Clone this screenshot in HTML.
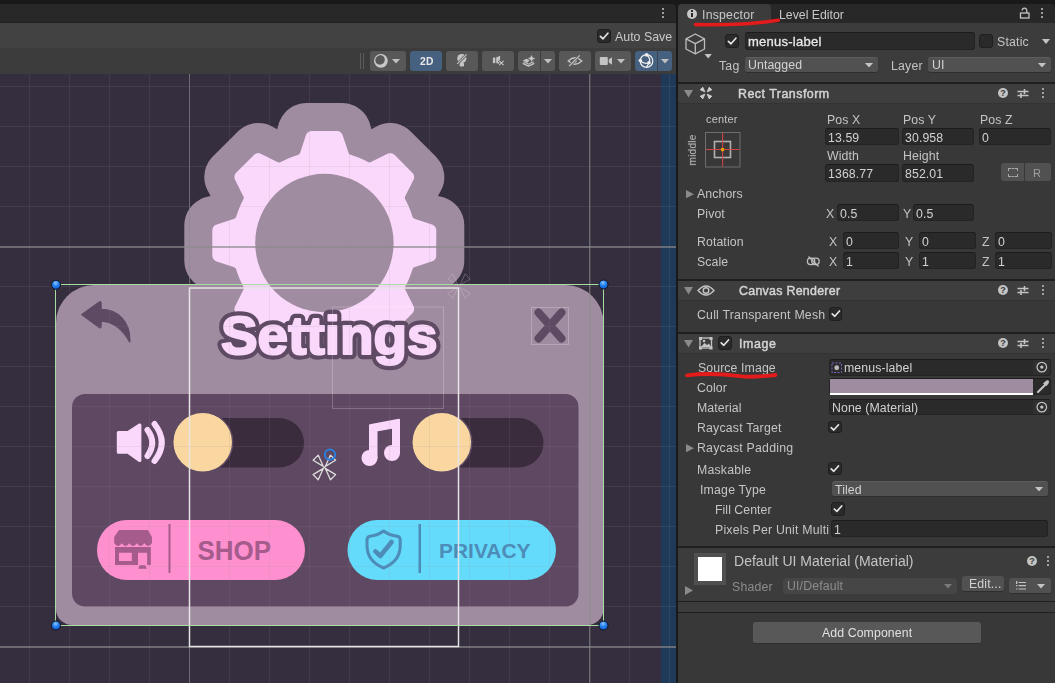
<!DOCTYPE html>
<html><head><meta charset="utf-8">
<style>
*{box-sizing:border-box;margin:0;padding:0}
html,body{width:1055px;height:683px;overflow:hidden;background:#191919;font-family:"Liberation Sans",sans-serif;color:#c4c4c4;font-size:12px;position:relative}
.a{position:absolute}
.t{position:absolute;white-space:nowrap;font-family:"Liberation Sans",sans-serif;will-change:transform}
</style></head><body>
<div class="a" style="left:0px;top:4px;width:676.00px;height:19.00px;background:#282828;border-radius:0 4px 0 0"></div>
<div class="a" style="left:0px;top:22px;width:676.00px;height:1.00px;background:#222222;"></div>
<div class="a" style="left:0px;top:23px;width:676.00px;height:25.00px;background:#424242;"></div>
<div class="a" style="left:0px;top:48px;width:676.00px;height:26.00px;background:#3c3c3c;"></div>
<div class="a" style="left:662px;top:8px;width:2px;height:2px;background:#c4c4c4;border-radius:1px"></div>
<div class="a" style="left:662px;top:12px;width:2px;height:2px;background:#c4c4c4;border-radius:1px"></div>
<div class="a" style="left:662px;top:16px;width:2px;height:2px;background:#c4c4c4;border-radius:1px"></div>
<div class="a" style="left:597px;top:29px;width:14.00px;height:14.00px;background:#2a2a2a;border:1px solid #1f1f1f;border-radius:3px"></div>
<svg class="a" style="left:597px;top:29px" width="14" height="14" viewBox="0 0 14 14"><path d="M3.4,7.3 L6.0,9.8 L10.9,4.2" fill="none" stroke="#e4e4e4" stroke-width="1.7" stroke-linecap="round" stroke-linejoin="round"/></svg>
<div class="t" style="left:614.5px;top:31.00px;font-size:12.4px;line-height:12.4px;color:#c8c8c8;letter-spacing:0px;">Auto Save</div>
<div class="a" style="left:360px;top:53px;width:1.00px;height:16.00px;background:#5c5c5c;"></div>
<div class="a" style="left:363px;top:53px;width:1.00px;height:16.00px;background:#5c5c5c;"></div>
<div class="a" style="left:370px;top:51px;width:36.00px;height:20.00px;background:#585858;border-radius:3px"></div>
<div class="a" style="left:410px;top:51px;width:32.00px;height:20.00px;background:#46607f;border-radius:3px"></div>
<div class="a" style="left:446px;top:51px;width:32.00px;height:20.00px;background:#585858;border-radius:3px"></div>
<div class="a" style="left:482px;top:51px;width:32.00px;height:20.00px;background:#585858;border-radius:3px"></div>
<div class="a" style="left:518px;top:51px;width:37.00px;height:20.00px;background:#585858;border-radius:3px"></div>
<div class="a" style="left:540px;top:51px;width:1.00px;height:20.00px;background:#3e3e3e;"></div>
<div class="a" style="left:559px;top:51px;width:32.00px;height:20.00px;background:#585858;border-radius:3px"></div>
<div class="a" style="left:595px;top:51px;width:36.00px;height:20.00px;background:#585858;border-radius:3px"></div>
<div class="a" style="left:635px;top:51px;width:37.00px;height:20.00px;background:#46607f;border-radius:3px"></div>
<div class="a" style="left:657px;top:51px;width:1.00px;height:20.00px;background:#3c4450;"></div>
<svg class="a" style="left:391.5px;top:59px" width="8.0" height="4.5" viewBox="0 0 8.0 4.5"><path d="M0,0 L8.0,0 L4.0,4.5 Z" fill="#c0c0c0"/></svg>
<svg class="a" style="left:543.5px;top:59px" width="8.0" height="4.5" viewBox="0 0 8.0 4.5"><path d="M0,0 L8.0,0 L4.0,4.5 Z" fill="#c0c0c0"/></svg>
<svg class="a" style="left:617px;top:59px" width="8" height="4.5" viewBox="0 0 8 4.5"><path d="M0,0 L8,0 L4.0,4.5 Z" fill="#c0c0c0"/></svg>
<svg class="a" style="left:660.5px;top:59px" width="8.0" height="4.5" viewBox="0 0 8.0 4.5"><path d="M0,0 L8.0,0 L4.0,4.5 Z" fill="#c0c0c0"/></svg>
<div class="t" style="left:419.8px;top:56.58px;font-size:10.3px;line-height:10.3px;color:#e8e8e8;letter-spacing:0.2px;font-weight:bold;">2D</div>
<svg class="a" style="left:370px;top:51px" width="302" height="20" viewBox="370 51 302 20">
<circle cx="380.9" cy="60.8" r="6.3" fill="none" stroke="#c8c8c8" stroke-width="1.2"/>
<path d="M374.6,60.8 A6.3,6.3 0 1 0 387.2,60.8 A6.3,6.3 0 1 0 374.6,60.8 Z M375,59.8 A4.9,4.9 0 1 1 384.8,59.8 A4.9,4.9 0 1 1 375,59.8 Z" fill="#c8c8c8" fill-rule="evenodd"/>
<g fill="#c4c4c4">
<circle cx="461.8" cy="58.6" r="4.6"/>
<rect x="459.6" y="62.8" width="4.4" height="3.8" rx="1.3"/>
<path d="M456.3,64.8 L467.7,53.4" stroke="#585858" stroke-width="2.6"/>
<path d="M457.2,63.8 L466.7,54.3" stroke="#c4c4c4" stroke-width="1.1"/>
<rect x="492.9" y="57.6" width="2.4" height="5.5"/>
<path d="M496.2,57.6 L500.1,55.8 V64.3 L496.2,63 Z"/>
<path d="M498.9,60.6 L503.9,65.4 M503.9,60.6 L498.9,65.4" stroke="#585858" stroke-width="2.6"/>
<path d="M499.2,60.9 L503.6,65.1 M503.6,60.9 L499.2,65.1" stroke="#c4c4c4" stroke-width="1.2"/>
<path d="M522.8,60.6 L526.5,58.8 L529.5,60.3 L527.5,62.8 Z"/>
<path d="M522.8,63.3 L528.5,66.2 L534.3,63.3" fill="none" stroke="#c4c4c4" stroke-width="1.4" stroke-linejoin="round"/>
<path d="M523.5,61.8 L528.5,64.2 L533.5,61.8" fill="none" stroke="#c4c4c4" stroke-width="1.1"/>
<path d="M531.5,54.8 Q532.1,57.9 535.3,58.5 Q532.1,59.1 531.5,62.2 Q530.9,59.1 527.7,58.5 Q530.9,57.9 531.5,54.8 Z"/>
<path d="M568.2,61 Q575,54.5 581.8,61 Q575,67.5 568.2,61 Z" fill="none" stroke="#c4c4c4" stroke-width="1.3"/>
<circle cx="575" cy="61" r="1.8"/>
<path d="M568.6,66.6 L580.2,54.9" stroke="#585858" stroke-width="2.6"/>
<path d="M569.1,66.1 L579.7,55.4" stroke="#c4c4c4" stroke-width="1.3"/>
<rect x="599.8" y="57" width="8" height="8" rx="1"/>
<path d="M608.8,59.4 L612,57.3 V64.7 L608.8,62.6 Z"/>
</g>
<g fill="none" stroke="#f0f0f0" stroke-width="1.2">
<circle cx="646.5" cy="61" r="6.3"/>
<path d="M640.3,60.5 Q644,64.8 649,62.7 M646.6,54.8 Q651.2,58.8 649,62.7 Q647.8,65.3 646.3,67.3"/>
</g>
<g fill="#f0f0f0"><circle cx="646.6" cy="54.9" r="1.8"/><circle cx="640.3" cy="60.5" r="1.8"/><circle cx="649" cy="62.7" r="1.8"/></g>
</svg>
<svg class="a" style="left:0;top:74px" width="676" height="609" viewBox="0 74 676 609">
<rect x="0" y="74" width="676" height="609" fill="#352e3e"/>
<!-- panel -->
<path d="M56,323 A38,38 0 0 1 94,285 L565.5,285 A38,38 0 0 1 603.5,323 L603.5,609 A16,16 0 0 1 587.5,625 L72,625 A16,16 0 0 1 56,609 Z" fill="#a08ca0"/>
<path d="M72,407 A13,13 0 0 1 85,394 L565.5,394 A13,13 0 0 1 578.5,407 L578.5,593.5 A13,13 0 0 1 565.5,606.5 L85,606.5 A13,13 0 0 1 72,593.5 Z" fill="#5f4862"/>
<!-- gear outline -->
<path d="M210.6,195.9 L204.4,197.6 L201.8,198.6 L199.3,199.9 L195.8,202.2 L192.6,204.9 L189.9,208.2 L187.6,211.7 L186.0,215.6 L184.6,221.0 L184.3,225.2 L184.3,260.8 L184.8,266.3 L186.0,270.4 L187.6,274.3 L189.9,277.8 L193.6,282.0 L196.9,284.7 L200.5,286.8 L204.4,288.4 L210.6,290.1 L207.5,295.7 L205.8,299.6 L204.7,303.6 L204.3,307.8 L204.4,312.0 L205.6,317.5 L207.1,321.4 L209.2,325.1 L212.8,329.4 L237.9,354.5 L241.0,357.3 L244.6,359.6 L248.4,361.3 L252.5,362.4 L256.7,363.0 L260.9,362.9 L265.0,362.3 L269.1,361.0 L271.6,359.8 L277.2,356.7 L278.9,362.9 L279.9,365.5 L281.9,369.2 L284.3,372.6 L288.3,376.6 L291.8,379.0 L295.6,380.8 L299.6,382.2 L303.7,382.9 L306.5,383.0 L342.1,383.0 L347.6,382.5 L351.7,381.3 L355.6,379.7 L360.3,376.6 L363.3,373.7 L366.0,370.4 L368.1,366.8 L369.7,362.9 L371.4,356.7 L377.0,359.8 L380.9,361.5 L384.9,362.6 L389.1,363.0 L393.3,362.9 L398.8,361.7 L402.7,360.2 L406.4,358.1 L410.7,354.5 L435.8,329.4 L438.6,326.3 L440.9,322.7 L442.6,318.9 L443.7,314.8 L444.3,310.6 L444.2,306.4 L443.6,302.3 L442.3,298.2 L441.1,295.7 L438.0,290.1 L444.2,288.4 L446.8,287.4 L450.5,285.4 L453.9,283.0 L457.0,280.0 L460.3,275.5 L462.1,271.7 L463.5,267.7 L464.2,263.6 L464.3,260.8 L464.3,225.2 L463.8,219.7 L462.6,215.6 L460.3,210.5 L457.9,207.0 L455.0,204.0 L451.7,201.3 L448.1,199.2 L444.2,197.6 L438.0,195.9 L441.1,190.3 L442.8,186.4 L443.9,182.4 L444.3,178.2 L444.2,174.0 L443.0,168.5 L441.5,164.6 L439.4,160.9 L435.8,156.6 L410.7,131.5 L407.6,128.7 L404.0,126.4 L400.2,124.7 L396.1,123.6 L391.9,123.0 L387.7,123.1 L383.6,123.7 L379.5,125.0 L377.0,126.2 L371.4,129.3 L369.7,123.1 L368.1,119.2 L366.0,115.6 L363.3,112.3 L360.3,109.4 L355.6,106.3 L351.7,104.7 L347.6,103.5 L342.1,103.0 L306.5,103.0 L301.0,103.5 L296.9,104.7 L293.0,106.3 L289.5,108.6 L286.2,111.3 L283.5,114.5 L281.9,116.8 L279.9,120.5 L278.9,123.1 L277.2,129.3 L271.6,126.2 L269.1,125.0 L266.4,124.1 L262.3,123.2 L258.1,123.0 L253.9,123.3 L251.1,123.9 L247.1,125.2 L242.2,127.9 L238.9,130.5 L211.8,157.6 L208.4,162.1 L206.0,167.1 L204.9,171.2 L204.3,176.8 L204.5,181.0 L205.8,186.4 L207.5,190.3 L210.6,195.9 Z" fill="#a08ca0"/>
<!-- gear -->
<path d="M236.1,216.8 L235.4,218.0 L234.3,218.7 L215.3,225.1 L214.0,226.1 L213.1,227.3 L212.5,228.9 L212.3,230.4 L212.3,255.9 L213.0,258.5 L214.2,260.1 L215.9,261.2 L234.2,267.2 L235.3,267.9 L236.0,268.9 L237.7,274.0 L239.7,279.2 L243.7,287.5 L243.8,288.5 L243.5,289.5 L234.7,307.1 L234.4,309.4 L235.1,311.8 L236.2,313.3 L254.1,331.2 L255.2,332.1 L256.5,332.6 L258.5,332.9 L260.5,332.5 L277.7,323.9 L278.9,323.5 L280.2,323.8 L285.0,326.2 L290.1,328.4 L298.8,331.5 L299.5,332.1 L300.0,333.0 L306.3,351.7 L307.9,353.7 L309.1,354.4 L310.5,354.9 L337.0,355.0 L338.4,354.8 L339.8,354.3 L341.4,353.1 L342.5,351.4 L348.5,333.1 L349.2,332.0 L350.2,331.3 L355.3,329.6 L360.5,327.6 L368.8,323.6 L369.8,323.5 L370.8,323.8 L388.4,332.6 L389.8,332.9 L391.3,332.8 L392.7,332.4 L393.9,331.7 L412.5,313.2 L413.4,312.1 L413.9,310.8 L414.2,308.8 L413.8,306.8 L405.2,289.6 L404.8,288.4 L405.1,287.1 L407.5,282.3 L409.7,277.2 L412.8,268.5 L413.4,267.8 L414.3,267.3 L433.0,261.0 L435.0,259.4 L435.7,258.2 L436.2,256.8 L436.3,230.3 L436.1,228.9 L435.6,227.5 L434.4,225.9 L432.7,224.8 L414.4,218.8 L413.3,218.1 L412.6,217.1 L410.9,212.0 L408.9,206.8 L404.9,198.5 L404.8,197.5 L405.1,196.5 L413.9,178.9 L414.2,177.5 L414.1,176.0 L413.7,174.6 L413.0,173.4 L394.5,154.8 L393.4,153.9 L392.1,153.4 L390.1,153.1 L388.1,153.5 L370.9,162.1 L369.7,162.5 L368.4,162.2 L363.6,159.8 L358.5,157.6 L349.8,154.5 L349.1,153.9 L348.6,153.0 L342.3,134.3 L340.7,132.3 L339.4,131.5 L338.1,131.1 L311.6,131.0 L310.2,131.2 L308.8,131.7 L307.2,132.9 L306.1,134.6 L300.1,152.9 L299.4,154.0 L298.4,154.7 L293.3,156.4 L288.1,158.4 L279.8,162.4 L278.8,162.5 L277.8,162.2 L260.2,153.4 L258.8,153.1 L257.1,153.2 L255.7,153.7 L254.5,154.5 L236.1,172.8 L235.2,173.9 L234.7,175.2 L234.4,177.2 L234.8,179.2 L243.4,196.4 L243.8,197.6 L243.5,198.9 L240.9,204.2 L238.9,208.9 L236.1,216.8 Z" fill="#fad8fb"/>
<circle cx="324.4" cy="243" r="69.2" fill="#a08ca0"/>
<!-- back arrow -->
<path d="M82,314.6 L99,302.3 Q101,301 101,303.5 L101,309.5 C118,309.5 130.5,322 129.7,341.8 C123,329.5 113,321.5 101,321 L101,326 Q101,328.5 99,327.2 Z" fill="#5e4a63" stroke="#5e4a63" stroke-width="1.5" stroke-linejoin="round"/>
<!-- X -->
<path d="M538.5,312.5 L561.5,338.5 M561.5,312.5 L538.5,338.5" stroke="#5e4a63" stroke-width="8" stroke-linecap="round"/>
<!-- Settings -->
<text x="221" y="354.2" font-family="Liberation Sans" font-weight="bold" font-size="54.5" textLength="216.5" lengthAdjust="spacingAndGlyphs" fill="#5e4a63" stroke="#5e4a63" stroke-width="10.5" stroke-linejoin="round">Settings</text><text x="221" y="354.2" font-family="Liberation Sans" font-weight="bold" font-size="54.5" textLength="216.5" lengthAdjust="spacingAndGlyphs" fill="#fad8fb" stroke="#fad8fb" stroke-width="2.2" stroke-linejoin="round">Settings</text>
<!-- toggles -->
<rect x="172" y="418" width="132" height="49.5" rx="24.75" fill="#3a2b3d"/>
<circle cx="202.7" cy="442.3" r="30" fill="#fad7a0" stroke="#5e4a63" stroke-width="1.5"/>
<rect x="412" y="418" width="131.5" height="49.5" rx="24.75" fill="#3a2b3d"/>
<circle cx="441.8" cy="442.3" r="30" fill="#fad7a0" stroke="#5e4a63" stroke-width="1.5"/>
<!-- speaker -->
<path d="M118.3,432.5 L128,432.5 L139.5,425 L139.9,425 L139.9,460.5 L139.5,460.5 L128,452.3 L118.3,452.3 Z" fill="#fad8fb" stroke="#fad8fb" stroke-width="3" stroke-linejoin="round"/>
<path d="M147.5,430 Q157,442.5 147.5,456" fill="none" stroke="#fad8fb" stroke-width="6" stroke-linecap="round"/>
<path d="M154.5,424 Q169,442.5 154.5,461" fill="none" stroke="#fad8fb" stroke-width="6" stroke-linecap="round"/>
<!-- music note -->
<g fill="#fad8fb">
<circle cx="369.5" cy="458" r="8" />
<circle cx="392" cy="453" r="8" />
<path d="M370,425.2 L399,419.7 L399,453 L393,453 L393,427.5 L376.5,430.6 L376.5,458 L370,458 Z" stroke="#fad8fb" stroke-width="2" stroke-linejoin="round"/>
</g>
<!-- shop button -->
<rect x="97" y="520" width="208" height="60" rx="30" fill="#ff90d0"/>
<g fill="#a55b8b">
<path d="M119,530.1 L147.9,530.1 L151.9,537 L151.9,543.3 Q148.1,548.5 144.4,543.3 Q140.6,548.5 136.8,543.3 Q133.1,548.5 129.3,543.3 Q125.5,548.5 121.7,543.3 Q118.0,548.5 114.2,543.3 L114.2,537 Z"/>
<path d="M115,547 L150.8,547 L150.8,564.9 L147.2,564.9 L147.2,552.8 L138,552.8 L138,564.9 L115,564.9 Z M119,552.8 L119,560.9 L131.8,560.9 L131.8,552.8 Z" fill-rule="evenodd"/>
<path d="M139.5,565.3 L145.3,565.3 L146.8,568.8 L138.4,568.8 Z"/>
<rect x="168.5" y="524" width="2" height="49"/>
<text x="197.5" y="560" font-family="Liberation Sans" font-weight="bold" font-size="27.5" textLength="73.5" lengthAdjust="spacingAndGlyphs">SHOP</text>
</g>
<!-- privacy button -->
<rect x="347.5" y="520" width="208.5" height="60" rx="30" fill="#64dbfb"/>
<g fill="#4d8bb8" stroke="none">
<path d="M383.6,531 Q378,535.3 370,536.3 Q367,536.8 367,540 L367,546 Q367,561 383.6,568 Q400.2,561 400.2,546 L400.2,540 Q400.2,536.8 397.2,536.3 Q389.2,535.3 383.6,531 Z" fill="none" stroke="#4d8bb8" stroke-width="3" stroke-linejoin="round"/>
<path d="M375.4,551.4 L380.3,556 L391.6,542" fill="none" stroke="#4d8bb8" stroke-width="4.6" stroke-linecap="round" stroke-linejoin="round"/>
<rect x="418.5" y="524" width="2.5" height="49"/>
<text x="439" y="558" font-family="Liberation Sans" font-weight="bold" font-size="20.5" textLength="91.5" lengthAdjust="spacingAndGlyphs">PRIVACY</text>
</g>
<!-- blue strip -->
<rect x="661" y="74" width="15" height="609" fill="#1f3a58"/>
<!-- grid -->
<g fill="rgba(156,142,158,0.14)"><rect x="29" y="74" width="1" height="609"/><rect x="69" y="74" width="1" height="609"/><rect x="109" y="74" width="1" height="609"/><rect x="149" y="74" width="1" height="609"/><rect x="229" y="74" width="1" height="609"/><rect x="269" y="74" width="1" height="609"/><rect x="309" y="74" width="1" height="609"/><rect x="349" y="74" width="1" height="609"/><rect x="389" y="74" width="1" height="609"/><rect x="429" y="74" width="1" height="609"/><rect x="469" y="74" width="1" height="609"/><rect x="509" y="74" width="1" height="609"/><rect x="549" y="74" width="1" height="609"/><rect x="629" y="74" width="1" height="609"/><rect x="669" y="74" width="1" height="609"/><rect x="0" y="86" width="676" height="1"/><rect x="0" y="126" width="676" height="1"/><rect x="0" y="166" width="676" height="1"/><rect x="0" y="206" width="676" height="1"/><rect x="0" y="286" width="676" height="1"/><rect x="0" y="326" width="676" height="1"/><rect x="0" y="366" width="676" height="1"/><rect x="0" y="406" width="676" height="1"/><rect x="0" y="446" width="676" height="1"/><rect x="0" y="486" width="676" height="1"/><rect x="0" y="526" width="676" height="1"/><rect x="0" y="566" width="676" height="1"/><rect x="0" y="606" width="676" height="1"/></g><g fill="rgba(138,138,138,0.66)"><rect x="189" y="74" width="1" height="609"/><rect x="589" y="74" width="1.4" height="609"/><rect x="0" y="246" width="676" height="2"/><rect x="0" y="646" width="676" height="2"/></g>
<!-- overlays -->
<rect x="332.5" y="307" width="111" height="101.5" fill="none" stroke="rgba(255,255,255,0.22)" stroke-width="1"/>
<rect x="531.5" y="307.5" width="37" height="37" fill="none" stroke="rgba(255,255,255,0.22)" stroke-width="1"/>
<rect x="189.5" y="288" width="269" height="358.5" fill="none" stroke="#e6e3e6" stroke-width="1.5"/>
<rect x="55.5" y="284.5" width="548" height="341" fill="none" stroke="#a8dca2" stroke-width="1"/>
<path d="M323.3,466.4 L313.1,460.2 L318.2,455.1 Z M325.3,466.4 L335.6,460.2 L330.5,455.1 Z M323.3,468.4 L313.1,474.6 L318.2,479.7 Z M325.3,468.4 L335.6,474.6 L330.5,479.7 Z " fill="none" stroke="#dcdcdc" stroke-width="1.3" stroke-linejoin="round"/>
<rect x="323.3" y="466.4" width="2" height="2" fill="#dcdcdc"/>
<circle cx="330" cy="454.6" r="5.1" fill="none" stroke="#2a7fdc" stroke-width="2"/>
<path d="M457.9,285.2 L447.7,279.0 L452.8,273.9 Z M459.9,285.2 L470.2,279.0 L465.1,273.9 Z M457.9,287.2 L447.7,293.4 L452.8,298.5 Z M459.9,287.2 L470.2,293.4 L465.1,298.5 Z " fill="none" stroke="rgba(225,215,225,0.28)" stroke-width="1" stroke-linejoin="round"/>
<defs><radialGradient id="hg" cx="0.45" cy="0.3" r="0.7"><stop offset="0" stop-color="#8cc4ff"/><stop offset="0.45" stop-color="#2a86f0"/><stop offset="1" stop-color="#0656d0"/></radialGradient></defs><g fill="url(#hg)" stroke="#151520" stroke-width="1">
<circle cx="56" cy="284.8" r="4.5"/><circle cx="603.5" cy="284.5" r="4.5"/><circle cx="56" cy="625.5" r="4.5"/><circle cx="603.5" cy="625.5" r="4.5"/>
</g>
</svg>
<div class="a" style="left:676px;top:4px;width:2.00px;height:679.00px;background:#191919;"></div>
<div class="a" style="left:678px;top:4px;width:377.00px;height:19.00px;background:#282828;border-radius:4px 4px 0 0"></div>
<div class="a" style="left:678px;top:4px;width:92.50px;height:19.00px;background:#3c3c3c;border-radius:4px 4px 0 0"></div>
<div class="a" style="left:678px;top:23px;width:377.00px;height:660.00px;background:#383838;"></div>
<div class="a" style="left:678px;top:23px;width:377.00px;height:59.00px;background:#3c3c3c;"></div>
<div class="a" style="left:686.6px;top:9.1px;width:10.4px;height:10.4px;border-radius:50%;background:#c8c8c8"></div>
<div class="a" style="left:691px;top:10.2px;width:1.80px;height:1.50px;background:#282828;"></div>
<div class="a" style="left:691px;top:12.6px;width:1.80px;height:4.60px;background:#282828;"></div>
<div class="t" style="left:702px;top:8.99px;font-size:12.3px;line-height:12.3px;color:#c8c8c8;letter-spacing:0.22px;">Inspector</div>
<div class="t" style="left:779.4px;top:8.99px;font-size:12.3px;line-height:12.3px;color:#c8c8c8;letter-spacing:0px;">Level Editor</div>
<svg class="a" style="left:1019px;top:7px" width="12" height="12" viewBox="0 0 12 12"><rect x="1.5" y="6" width="8.5" height="5" fill="none" stroke="#c4c4c4" stroke-width="1.3"/><path d="M7.8,6 V4 Q7.8,1.2 5.5,1.2 Q3.2,1.2 3.2,3.5" fill="none" stroke="#c4c4c4" stroke-width="1.3"/></svg>
<div class="a" style="left:1041px;top:8px;width:2px;height:2px;background:#c4c4c4;border-radius:1px"></div>
<div class="a" style="left:1041px;top:12px;width:2px;height:2px;background:#c4c4c4;border-radius:1px"></div>
<div class="a" style="left:1041px;top:16px;width:2px;height:2px;background:#c4c4c4;border-radius:1px"></div>
<svg class="a" style="left:678px;top:4px" width="120" height="30" viewBox="678 4 120 30"><path d="M695.5,24.6 Q745,25.5 778.3,20.2" fill="none" stroke="#e31b1b" stroke-width="3.6" stroke-linecap="round"/></svg>
<svg class="a" style="left:684px;top:32px" width="30" height="28" viewBox="684 32 30 28">
<g fill="none" stroke="#bdbdbd" stroke-width="1.3" stroke-linejoin="round">
<path d="M695.3,34 L704.5,38.8 L704.5,49 L695.3,53.8 L686,49 L686,38.8 Z"/>
<path d="M686,38.8 L695.3,43.6 L704.5,38.8 M695.3,43.6 V53.8"/>
</g>
<path d="M704.5,54 H711.8 L708.15,58.5 Z" fill="#c4c4c4"/>
</svg>
<div class="a" style="left:725px;top:34px;width:14.00px;height:14.00px;background:#2a2a2a;border:1px solid #1f1f1f;border-radius:3px"></div>
<svg class="a" style="left:725px;top:34px" width="14" height="14" viewBox="0 0 14 14"><path d="M3.4,7.3 L6.0,9.8 L10.9,4.2" fill="none" stroke="#e4e4e4" stroke-width="1.7" stroke-linecap="round" stroke-linejoin="round"/></svg>
<div class="a" style="left:745.3px;top:32px;width:230.20px;height:18.00px;background:#2a2a2a;border:1px solid #232323;border-top-color:#1c1c1c;border-radius:3px"></div>
<div class="t" style="left:748.3px;top:34.70px;font-size:13px;line-height:13px;color:#e8e8e8;letter-spacing:0.25px;-webkit-text-stroke:0.3px #e8e8e8;">menus-label</div>
<div class="a" style="left:979.2px;top:34.2px;width:13.50px;height:13.50px;background:#2a2a2a;border:1px solid #1f1f1f;border-radius:3px"></div>
<div class="t" style="left:997.2px;top:35.89px;font-size:12.3px;line-height:12.3px;color:#c4c4c4;letter-spacing:0.2px;">Static</div>
<svg class="a" style="left:1042px;top:39px" width="8" height="5" viewBox="0 0 8 5"><path d="M0,0 L8,0 L4.0,5 Z" fill="#c4c4c4"/></svg>
<div class="t" style="left:718.5px;top:59.89px;font-size:12.3px;line-height:12.3px;color:#c4c4c4;letter-spacing:0.2px;">Tag</div>
<div class="a" style="left:744.7px;top:57.2px;width:133.40px;height:15.90px;background:#515151;border-radius:3px;border-bottom:1px solid #2e2e2e;border-top:1px solid #5c5c5c"></div>
<div class="t" style="left:747.8px;top:58.79px;font-size:12.3px;line-height:12.3px;color:#d2d2d2;letter-spacing:0.1px;">Untagged</div>
<svg class="a" style="left:865.1px;top:62.85000000000001px" width="8.0" height="4.599999999999994" viewBox="0 0 8.0 4.599999999999994"><path d="M0,0 L8.0,0 L4.0,4.599999999999994 Z" fill="#c4c4c4"/></svg>
<div class="t" style="left:891.4px;top:59.99px;font-size:12.3px;line-height:12.3px;color:#c4c4c4;letter-spacing:0.2px;">Layer</div>
<div class="a" style="left:928px;top:57px;width:123.00px;height:16.00px;background:#515151;border-radius:3px;border-bottom:1px solid #2e2e2e;border-top:1px solid #5c5c5c"></div>
<div class="t" style="left:931.7px;top:58.79px;font-size:12.3px;line-height:12.3px;color:#d2d2d2;letter-spacing:0.1px;">UI</div>
<svg class="a" style="left:1038px;top:62.7px" width="8" height="4.599999999999994" viewBox="0 0 8 4.599999999999994"><path d="M0,0 L8,0 L4.0,4.599999999999994 Z" fill="#c4c4c4"/></svg>
<div class="a" style="left:678px;top:81.5px;width:377.00px;height:2.00px;background:#1f1f1f;"></div>
<div class="a" style="left:678px;top:83.5px;width:377.00px;height:19.50px;background:#3e3e3e;"></div>
<div class="a" style="left:678px;top:103px;width:377.00px;height:1.00px;background:#333333;"></div>
<svg class="a" style="left:684px;top:90px" width="9" height="7.5" viewBox="0 0 9 7.5"><path d="M0,0 L9,0 L4.5,7.5 Z" fill="#8a8a8a"/></svg>
<svg class="a" style="left:699px;top:86px" width="14" height="14" viewBox="699 86 14 14">
<g fill="#cfcfcf" stroke="#cfcfcf" stroke-width="0.9" stroke-linejoin="round"><path d="M700.2,89.8 L702.8,87.2 L704.8,91.8 Z M711.8,89.8 L709.2,87.2 L707.2,91.8 Z M700.2,96.2 L702.8,98.8 L704.8,94.2 Z M711.8,96.2 L709.2,98.8 L707.2,94.2 Z"/></g></svg>
<div class="t" style="left:738.4px;top:88.00px;font-size:12.4px;line-height:12.4px;color:#d4d4d4;letter-spacing:0.5px;-webkit-text-stroke:0.45px #d4d4d4;">Rect Transform</div>
<div class="a" style="left:998px;top:88px;width:10px;height:10px;border-radius:50%;background:#c4c4c4;color:#383838;font-size:9px;line-height:10px;text-align:center;font-weight:bold">?</div>
<svg class="a" style="left:1017px;top:88px" width="12" height="11" viewBox="0 0 12 11"><path d="M0.5,3.5 H11.5 M0.5,7.5 H11.5" stroke="#c4c4c4" stroke-width="1.4"/><path d="M7.5,1 V6 M4,5 V10" stroke="#c4c4c4" stroke-width="1.6"/></svg>
<div class="a" style="left:1041.5px;top:88px;width:2px;height:2px;background:#c4c4c4;border-radius:1px"></div>
<div class="a" style="left:1041.5px;top:92px;width:2px;height:2px;background:#c4c4c4;border-radius:1px"></div>
<div class="a" style="left:1041.5px;top:96px;width:2px;height:2px;background:#c4c4c4;border-radius:1px"></div>
<div class="t" style="left:706px;top:113.59px;font-size:11px;line-height:11px;color:#c4c4c4;letter-spacing:0.15px;">center</div>
<div class="t" style="left:676.8px;top:145px;width:32px;text-align:center;font-size:10.2px;line-height:10.2px;color:#c4c4c4;letter-spacing:0.15px;transform:rotate(-90deg)">middle</div>
<svg class="a" style="left:705px;top:132px" width="36" height="36" viewBox="705 132 36 36">
<rect x="705.5" y="132.5" width="34.5" height="34.5" fill="none" stroke="#6e6e6e" stroke-width="1"/>
<rect x="714.5" y="141.5" width="16" height="16" fill="none" stroke="#b0b0b0" stroke-width="1.6"/>
<path d="M722.6,133 V166.5 M706,149.5 H739.5" stroke="#cf4545" stroke-width="1.1"/>
<rect x="721" y="148" width="3.2" height="3.2" fill="#e0a000"/>
</svg>
<div class="t" style="left:826.6px;top:114.09px;font-size:12.3px;line-height:12.3px;color:#c4c4c4;letter-spacing:0.1px;">Pos X</div>
<div class="t" style="left:902.8px;top:114.09px;font-size:12.3px;line-height:12.3px;color:#c4c4c4;letter-spacing:0.1px;">Pos Y</div>
<div class="t" style="left:979.6px;top:114.09px;font-size:12.3px;line-height:12.3px;color:#c4c4c4;letter-spacing:0.1px;">Pos Z</div>
<div class="a" style="left:825.3px;top:128.2px;width:73.30px;height:17.30px;background:#2a2a2a;border:1px solid #232323;border-top-color:#1c1c1c;border-radius:3px"></div>
<div class="t" style="left:828.3px;top:131.59px;font-size:12.3px;line-height:12.3px;color:#d2d2d2;letter-spacing:0.1px;">13.59</div>
<div class="a" style="left:901.6px;top:128.2px;width:72.90px;height:17.30px;background:#2a2a2a;border:1px solid #232323;border-top-color:#1c1c1c;border-radius:3px"></div>
<div class="t" style="left:904.6px;top:131.59px;font-size:12.3px;line-height:12.3px;color:#d2d2d2;letter-spacing:0.1px;">30.958</div>
<div class="a" style="left:978.6px;top:128.2px;width:72.70px;height:17.30px;background:#2a2a2a;border:1px solid #232323;border-top-color:#1c1c1c;border-radius:3px"></div>
<div class="t" style="left:981.6px;top:131.59px;font-size:12.3px;line-height:12.3px;color:#d2d2d2;letter-spacing:0.1px;">0</div>
<div class="t" style="left:826.6px;top:149.79px;font-size:12.3px;line-height:12.3px;color:#c4c4c4;letter-spacing:0.1px;">Width</div>
<div class="t" style="left:902.8px;top:149.79px;font-size:12.3px;line-height:12.3px;color:#c4c4c4;letter-spacing:0.1px;">Height</div>
<div class="a" style="left:825.3px;top:164.4px;width:73.30px;height:17.30px;background:#2a2a2a;border:1px solid #232323;border-top-color:#1c1c1c;border-radius:3px"></div>
<div class="t" style="left:828.3px;top:167.79px;font-size:12.3px;line-height:12.3px;color:#d2d2d2;letter-spacing:0.1px;">1368.77</div>
<div class="a" style="left:901.6px;top:164.4px;width:72.90px;height:17.30px;background:#2a2a2a;border:1px solid #232323;border-top-color:#1c1c1c;border-radius:3px"></div>
<div class="t" style="left:904.6px;top:167.79px;font-size:12.3px;line-height:12.3px;color:#d2d2d2;letter-spacing:0.1px;">852.01</div>
<div class="a" style="left:1001.3px;top:162.7px;width:22.70px;height:18.30px;background:#515151;border-radius:3px 0 0 3px"></div>
<div class="a" style="left:1025.2px;top:162.7px;width:25.80px;height:18.30px;background:#515151;border-radius:0 3px 3px 0"></div>
<div class="a" style="left:1008px;top:167.5px;width:10px;height:9px;border:1px dashed #aaaaaa"></div>
<div class="t" style="left:1033px;top:167.69px;font-size:11px;line-height:11px;color:#a0a0a0;letter-spacing:0px;">R</div>
<svg class="a" style="left:686px;top:190px" width="8" height="8.300000000000011" viewBox="0 0 8 8.300000000000011"><path d="M0,0 L8,4.150000000000006 L0,8.300000000000011 Z" fill="#8a8a8a"/></svg>
<div class="t" style="left:697.2px;top:188.09px;font-size:12.3px;line-height:12.3px;color:#c4c4c4;letter-spacing:0.1px;">Anchors</div>
<div class="t" style="left:697.2px;top:208.29px;font-size:12.3px;line-height:12.3px;color:#c4c4c4;letter-spacing:0.1px;">Pivot</div>
<div class="t" style="left:826px;top:208.09px;font-size:12.3px;line-height:12.3px;color:#c4c4c4;letter-spacing:0.1px;">X</div>
<div class="a" style="left:837.2px;top:204.1px;width:61.40px;height:17.40px;background:#2a2a2a;border:1px solid #232323;border-top-color:#1c1c1c;border-radius:3px"></div>
<div class="t" style="left:840.2px;top:207.79px;font-size:12.3px;line-height:12.3px;color:#d2d2d2;letter-spacing:0.1px;">0.5</div>
<div class="t" style="left:902.8px;top:208.09px;font-size:12.3px;line-height:12.3px;color:#c4c4c4;letter-spacing:0.1px;">Y</div>
<div class="a" style="left:913.4px;top:204.1px;width:61.10px;height:17.40px;background:#2a2a2a;border:1px solid #232323;border-top-color:#1c1c1c;border-radius:3px"></div>
<div class="t" style="left:916.4px;top:207.79px;font-size:12.3px;line-height:12.3px;color:#d2d2d2;letter-spacing:0.1px;">0.5</div>
<div class="t" style="left:697.2px;top:236.29px;font-size:12.3px;line-height:12.3px;color:#c4c4c4;letter-spacing:0.1px;">Rotation</div>
<div class="t" style="left:829px;top:236.09px;font-size:12.3px;line-height:12.3px;color:#c4c4c4;letter-spacing:0.1px;">X</div>
<div class="a" style="left:843.2px;top:232.2px;width:56.10px;height:17.20px;background:#2a2a2a;border:1px solid #232323;border-top-color:#1c1c1c;border-radius:3px"></div>
<div class="t" style="left:846.3px;top:235.59px;font-size:12.3px;line-height:12.3px;color:#d2d2d2;letter-spacing:0.1px;">0</div>
<div class="t" style="left:905.4px;top:236.09px;font-size:12.3px;line-height:12.3px;color:#c4c4c4;letter-spacing:0.1px;">Y</div>
<div class="a" style="left:919.3px;top:232.2px;width:56.50px;height:17.20px;background:#2a2a2a;border:1px solid #232323;border-top-color:#1c1c1c;border-radius:3px"></div>
<div class="t" style="left:922.3px;top:235.59px;font-size:12.3px;line-height:12.3px;color:#d2d2d2;letter-spacing:0.1px;">0</div>
<div class="t" style="left:981.5px;top:236.09px;font-size:12.3px;line-height:12.3px;color:#c4c4c4;letter-spacing:0.1px;">Z</div>
<div class="a" style="left:995.2px;top:232.2px;width:56.50px;height:17.20px;background:#2a2a2a;border:1px solid #232323;border-top-color:#1c1c1c;border-radius:3px"></div>
<div class="t" style="left:998.2px;top:235.59px;font-size:12.3px;line-height:12.3px;color:#d2d2d2;letter-spacing:0.1px;">0</div>
<div class="t" style="left:697.2px;top:256.19px;font-size:12.3px;line-height:12.3px;color:#c4c4c4;letter-spacing:0.1px;">Scale</div>
<svg class="a" style="left:806px;top:255px" width="15" height="13" viewBox="806 255 15 13"><g fill="none" stroke="#c0c0c0" stroke-width="1.2"><rect x="807.4" y="258.2" width="7.4" height="6.4" rx="3"/><rect x="811.8" y="258.2" width="7.4" height="6.4" rx="3"/><path d="M808.5,256.5 L818.5,266.5"/></g></svg>
<div class="t" style="left:829px;top:256.09px;font-size:12.3px;line-height:12.3px;color:#c4c4c4;letter-spacing:0.1px;">X</div>
<div class="a" style="left:843.2px;top:252.3px;width:56.10px;height:17.10px;background:#2a2a2a;border:1px solid #232323;border-top-color:#1c1c1c;border-radius:3px"></div>
<div class="t" style="left:846.3px;top:255.59px;font-size:12.3px;line-height:12.3px;color:#d2d2d2;letter-spacing:0.1px;">1</div>
<div class="t" style="left:905.4px;top:256.09px;font-size:12.3px;line-height:12.3px;color:#c4c4c4;letter-spacing:0.1px;">Y</div>
<div class="a" style="left:919.3px;top:252.3px;width:56.50px;height:17.10px;background:#2a2a2a;border:1px solid #232323;border-top-color:#1c1c1c;border-radius:3px"></div>
<div class="t" style="left:922.3px;top:255.59px;font-size:12.3px;line-height:12.3px;color:#d2d2d2;letter-spacing:0.1px;">1</div>
<div class="t" style="left:981.5px;top:256.09px;font-size:12.3px;line-height:12.3px;color:#c4c4c4;letter-spacing:0.1px;">Z</div>
<div class="a" style="left:995.2px;top:252.3px;width:56.50px;height:17.10px;background:#2a2a2a;border:1px solid #232323;border-top-color:#1c1c1c;border-radius:3px"></div>
<div class="t" style="left:998.2px;top:255.59px;font-size:12.3px;line-height:12.3px;color:#d2d2d2;letter-spacing:0.1px;">1</div>
<div class="a" style="left:678px;top:278.5px;width:377.00px;height:2.50px;background:#1f1f1f;"></div>
<div class="a" style="left:678px;top:281px;width:377.00px;height:19.00px;background:#3e3e3e;"></div>
<div class="a" style="left:678px;top:300px;width:377.00px;height:1.00px;background:#333333;"></div>
<svg class="a" style="left:684px;top:287px" width="9" height="7.5" viewBox="0 0 9 7.5"><path d="M0,0 L9,0 L4.5,7.5 Z" fill="#8a8a8a"/></svg>
<svg class="a" style="left:697px;top:284px" width="18" height="13" viewBox="697 284 18 13"><path d="M698,290.5 Q706,281.5 714,290.5 Q706,299.5 698,290.5 Z" fill="none" stroke="#c4c4c4" stroke-width="1.3"/><circle cx="706" cy="290.5" r="2.8" fill="none" stroke="#c4c4c4" stroke-width="1.4"/></svg>
<div class="t" style="left:738.6px;top:285.00px;font-size:12.4px;line-height:12.4px;color:#d4d4d4;letter-spacing:0.28px;-webkit-text-stroke:0.45px #d4d4d4;">Canvas Renderer</div>
<div class="a" style="left:998px;top:285px;width:10px;height:10px;border-radius:50%;background:#c4c4c4;color:#383838;font-size:9px;line-height:10px;text-align:center;font-weight:bold">?</div>
<svg class="a" style="left:1017px;top:285px" width="12" height="11" viewBox="0 0 12 11"><path d="M0.5,3.5 H11.5 M0.5,7.5 H11.5" stroke="#c4c4c4" stroke-width="1.4"/><path d="M7.5,1 V6 M4,5 V10" stroke="#c4c4c4" stroke-width="1.6"/></svg>
<div class="a" style="left:1041.5px;top:285px;width:2px;height:2px;background:#c4c4c4;border-radius:1px"></div>
<div class="a" style="left:1041.5px;top:289px;width:2px;height:2px;background:#c4c4c4;border-radius:1px"></div>
<div class="a" style="left:1041.5px;top:293px;width:2px;height:2px;background:#c4c4c4;border-radius:1px"></div>
<div class="t" style="left:697.2px;top:309.19px;font-size:12.3px;line-height:12.3px;color:#c4c4c4;letter-spacing:0.22px;">Cull Transparent Mesh</div>
<div class="a" style="left:828.6px;top:307.3px;width:13.40px;height:13.30px;background:#2a2a2a;border:1px solid #1f1f1f;border-radius:3px"></div>
<svg class="a" style="left:828.6px;top:307.3px" width="13.399999999999977" height="13.300000000000011" viewBox="0 0 13.399999999999977 13.300000000000011"><path d="M3.2,6.9 L5.8,9.3 L10.5,4.0" fill="none" stroke="#e4e4e4" stroke-width="1.7" stroke-linecap="round" stroke-linejoin="round"/></svg>
<div class="a" style="left:678px;top:331.5px;width:377.00px;height:2.50px;background:#1f1f1f;"></div>
<div class="a" style="left:678px;top:334px;width:377.00px;height:19.40px;background:#3e3e3e;"></div>
<div class="a" style="left:678px;top:353.4px;width:377.00px;height:1.00px;background:#333333;"></div>
<svg class="a" style="left:684px;top:340px" width="9" height="7.5" viewBox="0 0 9 7.5"><path d="M0,0 L9,0 L4.5,7.5 Z" fill="#8a8a8a"/></svg>
<svg class="a" style="left:698px;top:336px" width="16" height="14" viewBox="698 336 16 14"><rect x="700" y="338" width="11.5" height="10" fill="none" stroke="#c4c4c4" stroke-width="1.3"/><path d="M701,347 L704.5,343 L707,345 L709,343.5 L711,347 Z" fill="#c4c4c4"/><circle cx="704" cy="341" r="1.3" fill="#c4c4c4"/><rect x="699" y="337" width="3" height="3" fill="#c4c4c4"/><rect x="709.5" y="337" width="3" height="3" fill="#c4c4c4"/><rect x="699" y="346.5" width="3" height="3" fill="#c4c4c4"/><rect x="709.5" y="346.5" width="3" height="3" fill="#c4c4c4"/></svg>
<div class="a" style="left:718px;top:336.3px;width:13.50px;height:13.30px;background:#2a2a2a;border:1px solid #1f1f1f;border-radius:3px"></div>
<svg class="a" style="left:718px;top:336.3px" width="13.5" height="13.300000000000011" viewBox="0 0 13.5 13.300000000000011"><path d="M3.2,6.9 L5.8,9.3 L10.5,4.0" fill="none" stroke="#e4e4e4" stroke-width="1.7" stroke-linecap="round" stroke-linejoin="round"/></svg>
<div class="t" style="left:738.6px;top:338.00px;font-size:12.4px;line-height:12.4px;color:#d4d4d4;letter-spacing:0.6px;-webkit-text-stroke:0.45px #d4d4d4;">Image</div>
<div class="a" style="left:998px;top:338px;width:10px;height:10px;border-radius:50%;background:#c4c4c4;color:#383838;font-size:9px;line-height:10px;text-align:center;font-weight:bold">?</div>
<svg class="a" style="left:1017px;top:338px" width="12" height="11" viewBox="0 0 12 11"><path d="M0.5,3.5 H11.5 M0.5,7.5 H11.5" stroke="#c4c4c4" stroke-width="1.4"/><path d="M7.5,1 V6 M4,5 V10" stroke="#c4c4c4" stroke-width="1.6"/></svg>
<div class="a" style="left:1041.5px;top:338px;width:2px;height:2px;background:#c4c4c4;border-radius:1px"></div>
<div class="a" style="left:1041.5px;top:342px;width:2px;height:2px;background:#c4c4c4;border-radius:1px"></div>
<div class="a" style="left:1041.5px;top:346px;width:2px;height:2px;background:#c4c4c4;border-radius:1px"></div>
<div class="t" style="left:697.5px;top:361.79px;font-size:12.3px;line-height:12.3px;color:#c4c4c4;letter-spacing:0.1px;">Source Image</div>
<div class="a" style="left:828.6px;top:358.5px;width:222.70px;height:17.10px;background:#2a2a2a;border:1px solid #232323;border-top-color:#1c1c1c;border-radius:3px"></div>
<div class="a" style="left:1033px;top:359.5px;width:17.30px;height:15.10px;background:#303030;border-radius:0 2px 2px 0"></div>
<svg class="a" style="left:1035px;top:361px" width="14" height="13" viewBox="1035 361 14 13"><circle cx="1041.8" cy="367.1" r="4.8" fill="none" stroke="#c4c4c4" stroke-width="1.2"/><circle cx="1041.8" cy="367.1" r="1.7" fill="#c4c4c4"/></svg>
<svg class="a" style="left:831px;top:362px" width="12" height="12" viewBox="831 362 12 12"><rect x="832" y="363" width="9.5" height="9.5" fill="none" stroke="#8060c0" stroke-width="1" stroke-dasharray="2 1.5"/><circle cx="836.75" cy="367.75" r="2.4" fill="#bbbbbb"/></svg>
<div class="t" style="left:844.3px;top:361.59px;font-size:12.3px;line-height:12.3px;color:#d2d2d2;letter-spacing:0.12px;">menus-label</div>
<svg class="a" style="left:678px;top:368px" width="110" height="14" viewBox="678 368 110 14"><path d="M687,375.3 C705,373 722,373.8 740,376.2 C755,377.8 765,376 775.5,375" fill="none" stroke="#e31b1b" stroke-width="3.8" stroke-linecap="round"/></svg>
<div class="t" style="left:697.2px;top:382.29px;font-size:12.3px;line-height:12.3px;color:#c4c4c4;letter-spacing:0.1px;">Color</div>
<div class="a" style="left:828.6px;top:378.4px;width:222.70px;height:17.10px;background:#2a2a2a;border:1px solid #232323;border-top-color:#1c1c1c;border-radius:3px"></div>
<div class="a" style="left:829.6px;top:379.4px;width:203.40px;height:13.20px;background:#a08ca0;"></div>
<div class="a" style="left:829.6px;top:392.6px;width:203.40px;height:2.40px;background:#ffffff;"></div>
<svg class="a" style="left:1035px;top:379px" width="15" height="15" viewBox="1035 379 15 15"><path d="M1038,392 L1045,385" stroke="#c4c4c4" stroke-width="2.2" stroke-linecap="round"/><path d="M1043,383.5 L1046.5,380.5 Q1048.5,379.8 1049,381.5 Q1049.3,383 1046.5,386 Z" fill="#c4c4c4"/></svg>
<div class="t" style="left:697.2px;top:402.09px;font-size:12.3px;line-height:12.3px;color:#c4c4c4;letter-spacing:0.1px;">Material</div>
<div class="a" style="left:828.6px;top:398.9px;width:222.70px;height:16.50px;background:#2a2a2a;border:1px solid #232323;border-top-color:#1c1c1c;border-radius:3px"></div>
<div class="t" style="left:831.6px;top:402.09px;font-size:12.3px;line-height:12.3px;color:#d2d2d2;letter-spacing:0.1px;">None (Material)</div>
<div class="a" style="left:1033px;top:399.9px;width:17.30px;height:14.50px;background:#303030;border-radius:0 2px 2px 0"></div>
<svg class="a" style="left:1035px;top:400px" width="14" height="14" viewBox="1035 400 14 14"><circle cx="1041.8" cy="407.1" r="4.8" fill="none" stroke="#c4c4c4" stroke-width="1.2"/><circle cx="1041.8" cy="407.1" r="1.7" fill="#c4c4c4"/></svg>
<div class="t" style="left:697.2px;top:422.19px;font-size:12.3px;line-height:12.3px;color:#c4c4c4;letter-spacing:0.2px;">Raycast Target</div>
<div class="a" style="left:828.2px;top:420.7px;width:13.40px;height:12.80px;background:#2a2a2a;border:1px solid #1f1f1f;border-radius:3px"></div>
<svg class="a" style="left:828.2px;top:420.7px" width="13.399999999999977" height="12.800000000000011" viewBox="0 0 13.399999999999977 12.800000000000011"><path d="M3.2,6.7 L5.8,9.0 L10.5,3.8" fill="none" stroke="#e4e4e4" stroke-width="1.7" stroke-linecap="round" stroke-linejoin="round"/></svg>
<svg class="a" style="left:686px;top:443.5px" width="8" height="8.300000000000011" viewBox="0 0 8 8.300000000000011"><path d="M0,0 L8,4.150000000000006 L0,8.300000000000011 Z" fill="#8a8a8a"/></svg>
<div class="t" style="left:697.2px;top:442.19px;font-size:12.3px;line-height:12.3px;color:#c4c4c4;letter-spacing:0.22px;">Raycast Padding</div>
<div class="t" style="left:697.2px;top:464.09px;font-size:12.3px;line-height:12.3px;color:#c4c4c4;letter-spacing:0.2px;">Maskable</div>
<div class="a" style="left:828.2px;top:462.2px;width:13.40px;height:13.30px;background:#2a2a2a;border:1px solid #1f1f1f;border-radius:3px"></div>
<svg class="a" style="left:828.2px;top:462.2px" width="13.399999999999977" height="13.300000000000011" viewBox="0 0 13.399999999999977 13.300000000000011"><path d="M3.2,6.9 L5.8,9.3 L10.5,4.0" fill="none" stroke="#e4e4e4" stroke-width="1.7" stroke-linecap="round" stroke-linejoin="round"/></svg>
<div class="t" style="left:700.4px;top:484.09px;font-size:12.3px;line-height:12.3px;color:#c4c4c4;letter-spacing:0.2px;">Image Type</div>
<div class="a" style="left:832px;top:480.7px;width:215.80px;height:16.50px;background:#515151;border-radius:3px;border-bottom:1px solid #2e2e2e;border-top:1px solid #5c5c5c"></div>
<div class="t" style="left:835.3px;top:483.59px;font-size:12.3px;line-height:12.3px;color:#d2d2d2;letter-spacing:0.1px;">Tiled</div>
<svg class="a" style="left:1034.8px;top:486.65px" width="8.0" height="4.600000000000023" viewBox="0 0 8.0 4.600000000000023"><path d="M0,0 L8.0,0 L4.0,4.600000000000023 Z" fill="#c4c4c4"/></svg>
<div class="t" style="left:715.2px;top:504.09px;font-size:12.3px;line-height:12.3px;color:#c4c4c4;letter-spacing:0.05px;">Fill Center</div>
<div class="a" style="left:831.1px;top:502px;width:13.70px;height:13.50px;background:#2a2a2a;border:1px solid #1f1f1f;border-radius:3px"></div>
<svg class="a" style="left:831.1px;top:502px" width="13.699999999999932" height="13.5" viewBox="0 0 13.699999999999932 13.5"><path d="M3.3,7.0 L5.9,9.4 L10.7,4.0" fill="none" stroke="#e4e4e4" stroke-width="1.7" stroke-linecap="round" stroke-linejoin="round"/></svg>
<div class="a" style="left:715px;top:518px;width:114px;height:20px;overflow:hidden">
<div class="t" style="left:0.2px;top:6.09px;font-size:12.3px;line-height:12.3px;color:#c4c4c4;letter-spacing:0.2px;">Pixels Per Unit Multiplier</div>
</div>
<div class="a" style="left:831.2px;top:520.2px;width:217.30px;height:17.00px;background:#2a2a2a;border:1px solid #232323;border-top-color:#1c1c1c;border-radius:3px"></div>
<div class="t" style="left:834px;top:523.59px;font-size:12.3px;line-height:12.3px;color:#d2d2d2;letter-spacing:0.1px;">1</div>
<div class="a" style="left:678px;top:546.3px;width:377.00px;height:1.70px;background:#1f1f1f;"></div>
<div class="a" style="left:678px;top:548px;width:377.00px;height:53.00px;background:#3c3c3c;"></div>
<div class="a" style="left:693.8px;top:553px;width:32.00px;height:32.00px;background:#505050;"></div>
<div class="a" style="left:697.6px;top:556.8px;width:24.90px;height:24.50px;background:#ffffff;"></div>
<div class="t" style="left:734.2px;top:554.15px;font-size:14px;line-height:14px;color:#c4c4c4;letter-spacing:0.02px;">Default UI Material (Material)</div>
<div class="a" style="left:1026.7px;top:555.7px;width:10.5px;height:10.5px;border-radius:50%;background:#c4c4c4;color:#383838;font-size:9px;line-height:10.5px;text-align:center;font-weight:bold">?</div>
<div class="a" style="left:1047px;top:556px;width:2px;height:2px;background:#c4c4c4;border-radius:1px"></div>
<div class="a" style="left:1047px;top:560px;width:2px;height:2px;background:#c4c4c4;border-radius:1px"></div>
<div class="a" style="left:1047px;top:564px;width:2px;height:2px;background:#c4c4c4;border-radius:1px"></div>
<svg class="a" style="left:685px;top:586px" width="8.200000000000045" height="9" viewBox="0 0 8.200000000000045 9"><path d="M0,0 L8.200000000000045,4.5 L0,9 Z" fill="#8a8a8a"/></svg>
<div class="t" style="left:731.5px;top:581.39px;font-size:12.3px;line-height:12.3px;color:#8c8c8c;letter-spacing:0.2px;">Shader</div>
<div class="a" style="left:782.8px;top:578.1px;width:174.20px;height:15.90px;background:#464646;border-radius:3px"></div>
<div class="t" style="left:786.6px;top:579.89px;font-size:12.3px;line-height:12.3px;color:#8c8c8c;letter-spacing:0.15px;">UI/Default</div>
<svg class="a" style="left:944px;top:584px" width="8" height="4.5" viewBox="0 0 8 4.5"><path d="M0,0 L8,0 L4.0,4.5 Z" fill="#7a7a7a"/></svg>
<div class="a" style="left:961.8px;top:576px;width:42.50px;height:16.40px;background:#515151;border-radius:3px;border-bottom:1px solid #2e2e2e"></div>
<div class="t" style="left:968.5px;top:578.39px;font-size:12.3px;line-height:12.3px;color:#d2d2d2;letter-spacing:0.15px;">Edit...</div>
<div class="a" style="left:1008.9px;top:577.7px;width:42.30px;height:16.80px;background:#515151;border-radius:3px;border-bottom:1px solid #2e2e2e"></div>
<svg class="a" style="left:1015px;top:580px" width="14" height="12" viewBox="1015 580 14 12"><path d="M1018.5,582.5 H1026 M1018.5,585.7 H1026 M1018.5,589 H1026" stroke="#c4c4c4" stroke-width="1.2"/><path d="M1016,582.5 H1017.3 M1016,585.7 H1017.3 M1016,589 H1017.3 M1016.6,581 V584" stroke="#c4c4c4" stroke-width="1.2"/></svg>
<svg class="a" style="left:1037px;top:584px" width="8" height="4.5" viewBox="0 0 8 4.5"><path d="M0,0 L8,0 L4.0,4.5 Z" fill="#c4c4c4"/></svg>
<div class="a" style="left:678px;top:600.7px;width:377.00px;height:1.50px;background:#1f1f1f;"></div>
<div class="a" style="left:678px;top:602.2px;width:377.00px;height:10.10px;background:#3c3c3c;"></div>
<div class="a" style="left:678px;top:612.3px;width:377.00px;height:1.20px;background:#1f1f1f;"></div>
<div class="a" style="left:753px;top:622.1px;width:228.30px;height:22.00px;background:#585858;border-radius:3px;border-bottom:1px solid #2e2e2e"></div>
<div class="t" style="left:822.2px;top:627.49px;font-size:12.3px;line-height:12.3px;color:#e0e0e0;letter-spacing:0.1px;">Add Component</div>
</body></html>
